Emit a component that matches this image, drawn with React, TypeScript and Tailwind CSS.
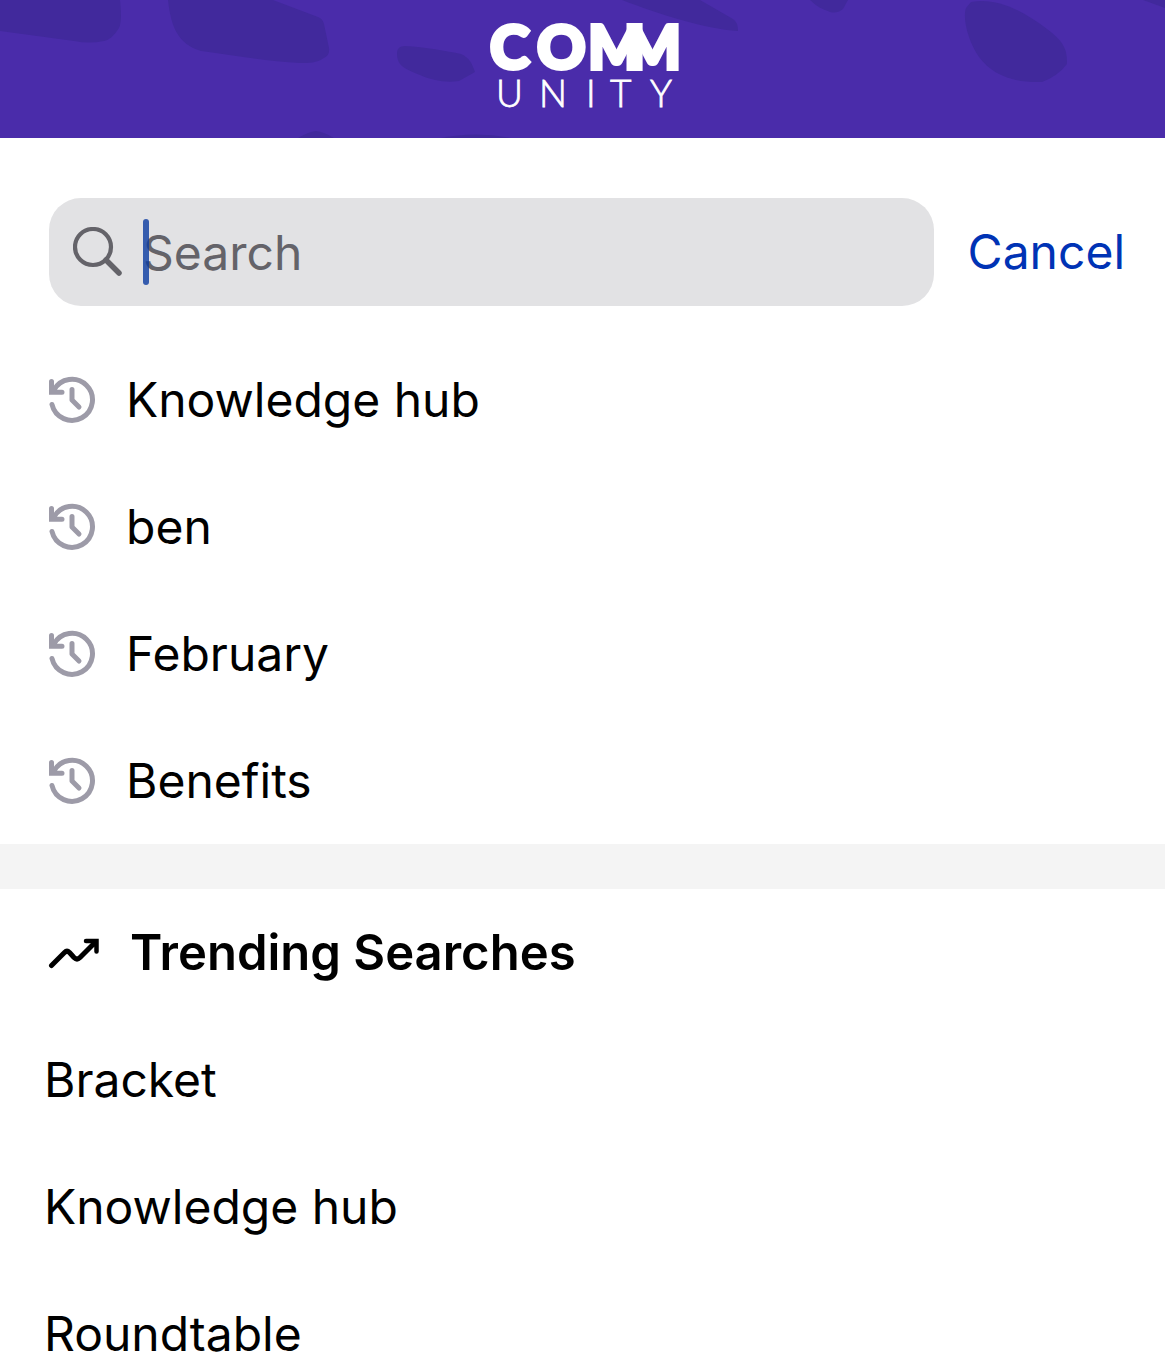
import { useState } from 'react';

const recentSearches = ['Knowledge hub', 'ben', 'February', 'Benefits'];
const trendingSearches = ['Bracket', 'Knowledge hub', 'Roundtable'];

function SearchIcon() {
  return (
    <svg
      viewBox="0 0 50 50"
      className="size-[50px] shrink-0"
      fill="none"
      stroke="#646369"
      strokeLinecap="round"
      aria-hidden="true"
    >
      <circle cx="20" cy="20" r="18" strokeWidth="4.200" />
      <path d="M33 33 46 46" strokeWidth="5.500" />
    </svg>
  );
}

function HistoryIcon() {
  return (
    <svg
      viewBox="0 0 48 48"
      className="size-12 shrink-0"
      fill="none"
      stroke="#9d9ba8"
      strokeWidth="5"
      strokeLinecap="round"
      aria-hidden="true"
    >
      <path d="M6 14A20.500 20.500 0 1 1 4 28.500" />
      <path d="M3.500 5.500V16.200H14" strokeLinejoin="miter" />
      <path d="M4 10V16H10Z" fill="#9d9ba8" stroke="none" />
      <path d="M24 13.500V24L31 31" strokeLinejoin="round" />
    </svg>
  );
}

function TrendingIcon() {
  return (
    <svg
      viewBox="0 0 52 32"
      className="h-8 w-[52px] shrink-0"
      fill="none"
      stroke="#000"
      strokeWidth="5"
      strokeLinecap="round"
      aria-hidden="true"
    >
      <path
        d="M3.500 28.500 16.500 15.500Q19 13 21.500 15.500L26 20.500Q29 23.500 32 20.500L47 5.500"
        strokeLinejoin="round"
      />
      <path d="M38 4H48.500V14.500" strokeWidth="4.500" />
      <path d="M41 4H48V11Z" fill="#000" stroke="none" />
    </svg>
  );
}

function Logo() {
  return (
    <svg viewBox="0 0 200 138" className="relative h-full w-[200px]" role="img" aria-label="Community">
      <g fill="#fff" stroke="#fff" fontFamily="Lato, sans-serif">
        <text x="7 54 105 141" y="69" fontSize="60" fontWeight="900" strokeWidth="4">
          COMM
        </text>
        <text x="13 56 103 127 167" y="107" fontSize="37" fontWeight="300" strokeWidth="0.8">
          UNITY
        </text>
      </g>
    </svg>
  );
}

function HeaderShapes() {
  return (
    <svg
      viewBox="0 0 1165 138"
      preserveAspectRatio="xMidYMin slice"
      className="absolute inset-0 size-full"
      fill="#41299c"
      aria-hidden="true"
    >
      <path d="M0 0H120C121 10 122 22 119 28C114 36 109 40 104 41C94 43 84 43 74 41L0 31Z" />
      <path d="M168 0H273L318 17Q323 19 324 24L329 48Q330 55 324 58C316 63 310 63 300 63C265 61 230 55 201 51C178 44 171 27 168 0Z" />
      <path d="M397 53Q397 46 405 46C425 47 447 51 461 54C470 58 472 64 475 72L459 81C445 83 431 80 420 75C406 69 397 67 397 53Z" />
      <path d="M298 138Q308 132 316 131Q324 132 334 138Z" />
      <path d="M441 138Q475 131 511 138Z" />
      <path d="M622 0H700L733 19Q738 22 738 31C704 29 659 14 622 0Z" />
      <path d="M810 0H848L843 9Q837 14 830 12C822 9 816 6 810 0Z" />
      <path d="M966 8L971 2C996-3 1022 10 1047 29C1064 42 1067 49 1067 64Q1058 76 1042 82C1015 83 993 76 979 57C969 43 962 19 966 8Z" />
      <path d="M1143 0H1165V8Z" />
    </svg>
  );
}

export default function App() {
  const [query, setQuery] = useState('');

  return (
    <div className="flex h-screen flex-col overflow-hidden bg-white font-['Inter',sans-serif] text-[48px] leading-[60px] text-black">
      <header className="relative flex h-[138px] shrink-0 justify-center bg-[#4a2caa]">
        <HeaderShapes />
        <Logo />
      </header>

      <form
        role="search"
        className="flex shrink-0 items-center gap-[34px] pt-[60px] pr-10 pb-[30px] pl-[49px]"
        onSubmit={(e) => e.preventDefault()}
      >
        <div className="flex h-[108px] min-w-0 flex-1 items-center gap-5 rounded-[32px] bg-[#e2e2e4] px-6">
          <SearchIcon />
          <div className="relative min-w-0 flex-1">
            <input
              type="text"
              aria-label="Search"
              placeholder="Search"
              value={query}
              onChange={(e) => setQuery(e.target.value)}
              className="block h-[66px] w-full bg-transparent caret-[#3559a8] outline-none placeholder:text-[#646369]"
            />
            {query === '' && (
              <span className="pointer-events-none absolute inset-y-0 left-0 w-1.5 rounded-full bg-[#0a3ba0]/80" />
            )}
          </div>
        </div>
        <button type="button" className="text-[#0033b5]" onClick={() => setQuery('')}>
          Cancel
        </button>
      </form>

      <ul className="shrink-0">
        {recentSearches.map((item) => (
          <li key={item}>
            <button
              type="button"
              className="flex h-[127px] w-full items-center gap-[30px] px-12 text-left"
              onClick={() => setQuery(item)}
            >
              <HistoryIcon />
              {item}
            </button>
          </li>
        ))}
      </ul>

      <div className="h-[45px] shrink-0 bg-[#f4f4f4]" />

      <section>
        <h2 className="flex h-[127px] items-center gap-[30px] px-12 text-[49px] font-semibold">
          <TrendingIcon />
          Trending Searches
        </h2>
        <ul>
          {trendingSearches.map((item) => (
            <li key={item}>
              <button
                type="button"
                className="h-[127px] w-full px-11 text-left"
                onClick={() => setQuery(item)}
              >
                {item}
              </button>
            </li>
          ))}
        </ul>
      </section>
    </div>
  );
}
